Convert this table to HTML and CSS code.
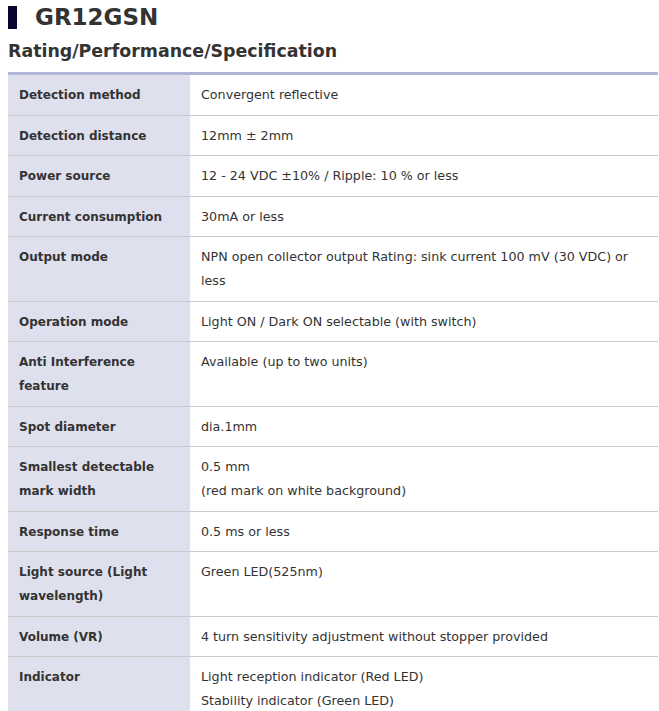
FILE: index.html
```html
<!DOCTYPE html>
<html lang="en">
<head>
<meta charset="utf-8">
<title>GR12GSN</title>
<link rel="stylesheet" href="styles.css">
</head>
<body>
<h1 class="product-title"><span class="title-mark"></span><span class="title-text">GR12GSN</span></h1>
<h2 class="section-title">Rating/Performance/Specification</h2>
<table class="spec-table">
<tbody>
<tr><th>Detection method</th><td>Convergent reflective</td></tr>
<tr><th>Detection distance</th><td>12mm ± 2mm</td></tr>
<tr><th>Power source</th><td>12 - 24 VDC ±10% / Ripple: 10 % or less</td></tr>
<tr><th>Current consumption</th><td>30mA or less</td></tr>
<tr><th>Output mode</th><td>NPN open collector output Rating: sink current 100 mV (30 VDC) or less</td></tr>
<tr><th>Operation mode</th><td>Light ON / Dark ON selectable (with switch)</td></tr>
<tr><th>Anti Interference feature</th><td>Available (up to two units)</td></tr>
<tr><th>Spot diameter</th><td>dia.1mm</td></tr>
<tr><th>Smallest detectable mark width</th><td>0.5 mm<br>(red mark on white background)</td></tr>
<tr><th>Response time</th><td>0.5 ms or less</td></tr>
<tr><th>Light source (Light wavelength)</th><td>Green LED(525nm)</td></tr>
<tr><th>Volume (VR)</th><td>4 turn sensitivity adjustment without stopper provided</td></tr>
<tr><th>Indicator</th><td>Light reception indicator (Red LED)<br>Stability indicator (Green LED)</td></tr>
</tbody>
</table>
</body>
</html>
```

FILE: styles.css
```css
body {
  margin: 6px 1px 0 8px;
  font-family: "DejaVu Sans", Verdana, sans-serif;
  color: #333;
  background: #fff;
}
.product-title {
  display: flex;
  align-items: center;
  gap: 18px;
  margin: 0;
  height: 23px;
  font-size: 23px;
  font-weight: bold;
  line-height: 23px;
}
.title-mark {
  width: 9px;
  height: 23px;
  background: #07052e;
}
.section-title {
  margin: 9px 0 0;
  font-size: 17.4px;
  font-weight: bold;
  line-height: 26px;
  padding-bottom: 8px;
  border-bottom: 3px solid #b1b5d7;
}
.spec-table {
  width: 650px;
  border-collapse: collapse;
  font-size: 12.7px;
}
.spec-table th,
.spec-table td {
  text-align: left;
  vertical-align: top;
  padding: 8px 11px 7.5px;
  line-height: 24px;
  border-bottom: 1px solid #cbcbcb;
}
.spec-table th {
  width: 160px;
  background: #dfe0ee;
  font-size: 12px;
  font-weight: bold;
}
.spec-table td {
  font-weight: normal;
}
```
